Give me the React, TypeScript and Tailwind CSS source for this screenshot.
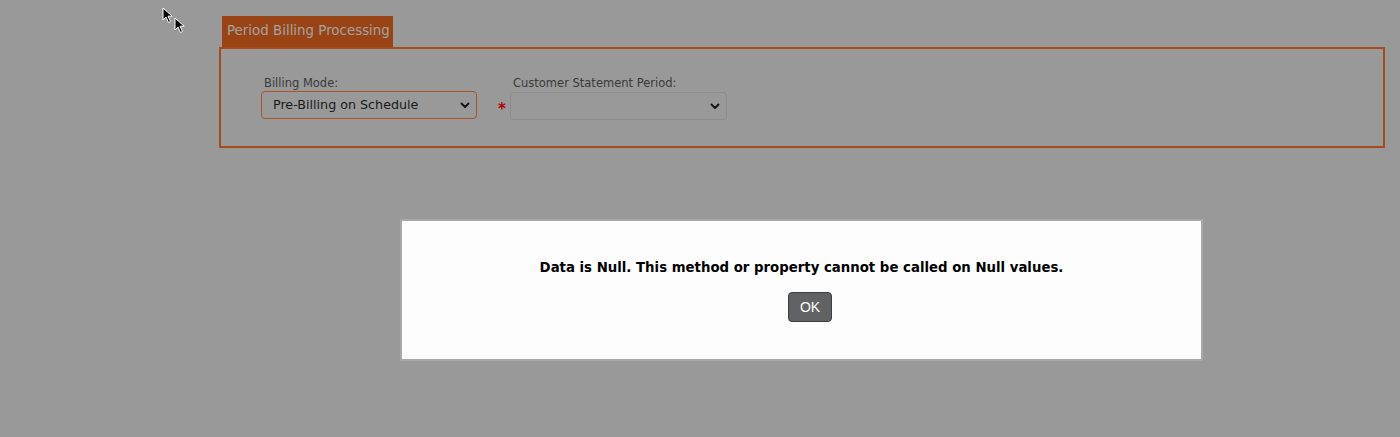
import React from "react";

const Chevron = () => (
  <svg width="10" height="7" viewBox="0 0 10 7" className="shrink-0">
    <path d="M1.5 1.5 L5 5 L8.5 1.5" fill="none" stroke="#111" strokeWidth="1.8" strokeLinecap="round" strokeLinejoin="round" />
  </svg>
);

const Cursor = ({ className }: { className: string }) => (
  <svg width="12" height="17" viewBox="0 0 12 17" className={className}>
    <path d="M1 1 L1 13 L4 10 L6.5 15.5 L8.5 14.5 L6 9.2 L10.2 9.2 Z" fill="#000" stroke="#fff" strokeWidth="1" strokeLinejoin="round" />
  </svg>
);

export default function App() {
  return (
    <div
      className="relative w-full h-[437px] bg-[#999999] overflow-hidden"
      style={{ fontFamily: '"DejaVu Sans", Verdana, sans-serif' }}
    >
      <Cursor className="absolute left-[162px] top-[7px]" />
      <Cursor className="absolute left-[174px] top-[17px]" />

      <div className="pl-[219px] pt-[16px] w-[1385px]">
        <div className="ml-[3px] w-[171px] h-[31px] bg-[#9a4416] flex items-center pl-[5px] text-[13.4px] text-[#a3a3a3]">
          Period Billing Processing
        </div>
        <div className="h-[101px] border-2 border-[#a44c1c] flex items-start pt-[27px] pl-[40px]">
          <div className="flex flex-col">
            <div className="text-[11.5px] text-[#3a3a3a] pl-[3px] leading-[14px] mb-[1px]">Billing Mode:</div>
            <div className="w-[216px] h-[28px] border border-[#a8552a] rounded-[4px] flex items-center justify-between pl-[11px] pr-[6px] text-[12.7px] text-[#1a1a1a]">
              <span>Pre-Billing on Schedule</span>
              <Chevron />
            </div>
          </div>
          <div className="mt-[26px] ml-[21px] w-[9px] text-[15px] leading-[15px] text-[#b30000] font-bold">*</div>
          <div className="flex flex-col ml-[3px]">
            <div className="text-[11.5px] text-[#3a3a3a] pl-[3px] leading-[14px] mb-[2px]">Customer Statement Period:</div>
            <div className="w-[217px] h-[28px] border border-[#8c8c8c] rounded-[4px] flex items-center justify-end pr-[6px]">
              <Chevron />
            </div>
          </div>
        </div>
      </div>

      <div className="absolute left-[400px] top-[219px] w-[803px] h-[142px] bg-[#fdfdfd] border-2 border-[#a8a8a8] flex flex-col items-center pt-[39px]">
        <div className="text-[13.3px] font-bold text-[#000] leading-[16px]">
          Data is Null. This method or property cannot be called on Null values.
        </div>
        <button
          className="mt-[16px] ml-[17px] w-[44px] h-[30px] rounded-[4px] bg-[#616264] border border-[#3e3e3e] text-white text-[14px]"
          style={{ fontFamily: '"Liberation Sans", Arial, sans-serif' }}
        >
          OK
        </button>
      </div>
    </div>
  );
}
